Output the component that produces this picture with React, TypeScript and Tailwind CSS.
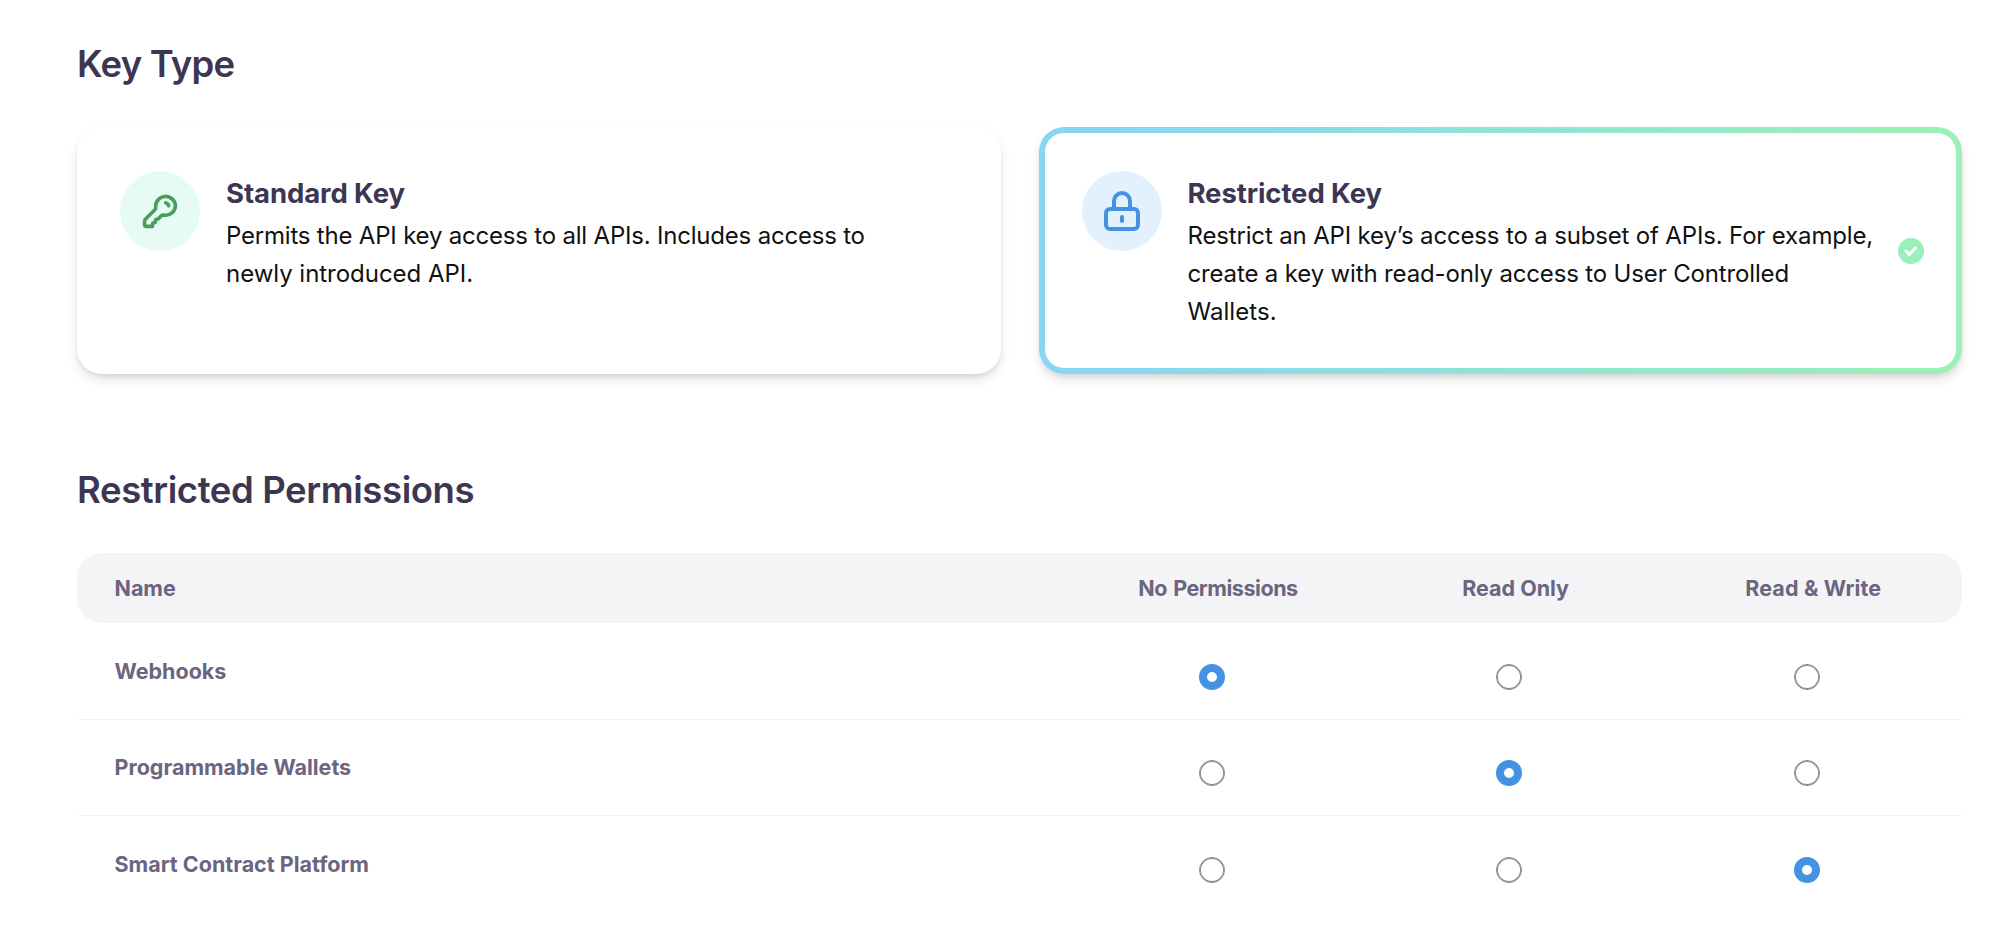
import { Fragment, useState, type ReactNode } from "react";

type Level = "none" | "read" | "write";
type KeyType = "standard" | "restricted";

function KeyIcon() {
  return (
    <svg className="size-[38px]" viewBox="0 0 24 24" fill="none" stroke="#4a9d5b" strokeWidth="2.3" strokeLinecap="round" strokeLinejoin="round">
      <path d="M15.7 6.9a2.4 2.4 0 0 1 1.8 1.8" />
      <path d="M21.75 8.5a6.25 6.25 0 0 1-7.3 6.1c-.6-.1-1.2.03-1.6.4L10.7 17.1l-1.4.3-.3 1.8-1.5.4-.3 2.15H3.2a.95.95 0 0 1-.95-.95v-2.2c0-.6.24-1.17.66-1.59l5.9-5.8c.42-.42.57-1 .47-1.6A6.25 6.25 0 1 1 21.75 8.5z" />
    </svg>
  );
}

function LockIcon() {
  return (
    <svg className="size-12" viewBox="0 0 48 48" fill="none" stroke="#4592e2" strokeWidth="4" strokeLinecap="round" strokeLinejoin="round">
      <rect x="8" y="22" width="32" height="20" rx="4" />
      <path d="M16 22v-8a8 8 0 0 1 16 0v8" />
      <path d="M24 30v4" />
    </svg>
  );
}

function CheckBadge() {
  return (
    <svg className="size-[26px]" viewBox="0 0 26 26" fill="none">
      <circle cx="13" cy="13" r="13" fill="#9bf0b9" />
      <path d="M8 13.2l3.3 3.3 6.2-6.4" stroke="#fff" strokeWidth="3.2" strokeLinecap="round" strokeLinejoin="round" />
    </svg>
  );
}

interface KeyCardProps {
  title: string;
  lines: { text: string; tracking: string }[];
  icon: ReactNode;
  iconBg: string;
  selected: boolean;
  onSelect: () => void;
}

function KeyCard({ title, lines, icon, iconBg, selected, onSelect }: KeyCardProps) {
  return (
    <button
      type="button"
      onClick={onSelect}
      className={`flex h-[247px] rounded-[25px] p-1.5 text-left shadow-[0_6px_12px_-1px_rgba(0,0,0,0.12),0_3px_5px_-1px_rgba(0,0,0,0.07)] ${
        selected ? "bg-[linear-gradient(92deg,#86d6f4_5%,#9befb8_95%)]" : "bg-white"
      }`}
    >
      <span className="flex h-full w-full items-start rounded-[19px] bg-white pt-[38px] pr-8 pl-[37px]">
        <span className={`flex size-20 shrink-0 items-center justify-center rounded-full ${iconBg}`}>{icon}</span>
        <span className="ml-[26px] flex grow flex-col pt-1">
          <span className="text-[27.5px] leading-9 font-bold tracking-[-0.1px] text-[#3d3653]">{title}</span>
          <span className="mt-1.5 text-[24px] leading-[37.9px] whitespace-nowrap text-[#111]">
            {lines.map((line, i) => (
              <Fragment key={line.text}>
                {i > 0 && <br />}
                <span className={line.tracking}>{line.text}</span>
              </Fragment>
            ))}
          </span>
        </span>
        {selected && (
          <span className="mt-[67px] shrink-0 -ml-6">
            <CheckBadge />
          </span>
        )}
      </span>
    </button>
  );
}

function Radio({ checked, label, onChange }: { checked: boolean; label: string; onChange: () => void }) {
  return (
    <button
      type="button"
      role="radio"
      aria-checked={checked}
      aria-label={label}
      onClick={onChange}
      className={`mt-3 mr-[13px] size-[26px] rounded-full bg-white ${
        checked ? "border-8 border-[#4592e2]" : "border border-[#85858c] shadow-[inset_0_0_0_0.9px_#85858c]"
      }`}
    />
  );
}

const columns: { id: Level; label: string; tracking: string }[] = [
  { id: "none", label: "No Permissions", tracking: "tracking-[-0.45px] [word-spacing:1.5px]" },
  { id: "read", label: "Read Only", tracking: "tracking-normal" },
  { id: "write", label: "Read & Write", tracking: "tracking-[0.15px]" },
];

const grid = "grid grid-cols-[1fr_297.6px_297.6px_297.6px] items-center";

export default function App() {
  const [keyType, setKeyType] = useState<KeyType>("restricted");
  const [levels, setLevels] = useState<Record<string, Level>>({
    Webhooks: "none",
    "Programmable Wallets": "read",
    "Smart Contract Platform": "write",
  });

  return (
    <main className="min-h-[946px] bg-white pt-10 pr-[37px] pl-[77px] font-['Inter','Liberation_Sans',sans-serif]">
      <h2 className="text-[36.5px] leading-[48px] font-[560] tracking-[-0.75px] text-[#3d3653]">Key Type</h2>
      <div className="mt-[39px] grid grid-cols-2 gap-[38px]">
        <KeyCard
          title="Standard Key"
          lines={[
            { text: "Permits the API key access to all APIs. Includes access to", tracking: "tracking-[-0.2px]" },
            { text: "newly introduced API.", tracking: "tracking-[-0.03px]" },
          ]}
          icon={<KeyIcon />}
          iconBg="bg-[#e6fbf3]"
          selected={keyType === "standard"}
          onSelect={() => setKeyType("standard")}
        />
        <KeyCard
          title="Restricted Key"
          lines={[
            { text: "Restrict an API key’s access to a subset of APIs. For example,", tracking: "tracking-[-0.16px]" },
            { text: "create a key with read-only access to User Controlled", tracking: "tracking-[-0.15px]" },
            { text: "Wallets.", tracking: "tracking-[0.05px]" },
          ]}
          icon={<LockIcon />}
          iconBg="bg-[#e3f1ff]"
          selected={keyType === "restricted"}
          onSelect={() => setKeyType("restricted")}
        />
      </div>

      <h2 className="mt-[92px] text-[36.5px] leading-[48px] font-[560] tracking-[-0.4px] text-[#3d3653]">
        Restricted Permissions
      </h2>
      <div className="mt-[38.5px] text-[21.5px] font-bold text-[#6b6580]">
        <div className={`${grid} h-[70.5px] rounded-[25px] bg-[#f4f4f7]`}>
          <span className="pl-[37.5px]">Name</span>
          {columns.map((c) => (
            <span key={c.id} className={`text-center ${c.tracking}`}>
              {c.label}
            </span>
          ))}
        </div>
        {Object.keys(levels).map((name) => (
          <div key={name} className={`${grid} h-[96.5px] border-b border-[#f4f4f7] last:border-b-0`}>
            <span className="pl-[37.5px]">{name}</span>
            {columns.map((c) => (
              <span key={c.id} className="flex justify-center">
                <Radio
                  checked={levels[name] === c.id}
                  label={`${name}: ${c.label}`}
                  onChange={() => setLevels({ ...levels, [name]: c.id })}
                />
              </span>
            ))}
          </div>
        ))}
      </div>
    </main>
  );
}
